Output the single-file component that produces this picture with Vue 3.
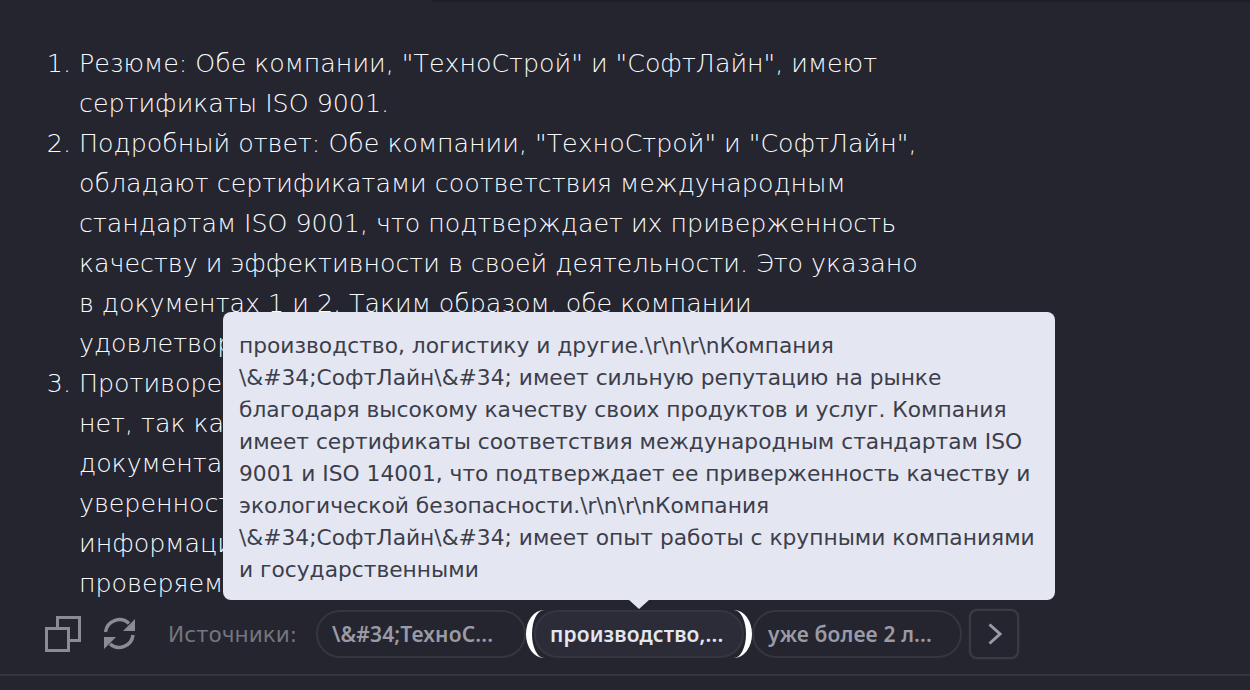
<script setup>
const sources = [
  { label: '\\&#34;ТехноС...', active: false },
  { label: 'производство,...', active: true },
  { label: 'уже более 2 л...', active: false },
];

const answers = [
  ['Резюме: Обе компании, "ТехноСтрой" и "СофтЛайн", имеют', 'сертификаты ISO 9001.'],
  [
    'Подробный ответ: Обе компании, "ТехноСтрой" и "СофтЛайн",',
    'обладают сертификатами соответствия международным',
    'стандартам ISO 9001, что подтверждает их приверженность',
    'качеству и эффективности в своей деятельности. Это указано',
    'в документах 1 и 2. Таким образом, обе компании',
    'удовлетворяют требованиям стандарта.',
  ],
  [
    'Противоречий в предоставленной информации',
    'нет, так как данные в обоих',
    'документах согласованы, что даёт',
    'уверенность в достоверности. Вся',
    'информация основана на',
    'проверяемых источниках.',
  ],
];

const tooltip = [
  'производство, логистику и другие.\\r\\n\\r\\nКомпания',
  '\\&#34;СофтЛайн\\&#34; имеет сильную репутацию на рынке',
  'благодаря высокому качеству своих продуктов и услуг. Компания',
  'имеет сертификаты соответствия международным стандартам ISO',
  '9001 и ISO 14001, что подтверждает ее приверженность качеству и',
  'экологической безопасности.\\r\\n\\r\\nКомпания',
  '\\&#34;СофтЛайн\\&#34; имеет опыт работы с крупными компаниями',
  'и государственными',
];
</script>

<template>
  <div class="page">
    <div class="top-edge"></div>
    <ol class="answer">
      <li v-for="(item, i) in answers" :key="i">
        <div v-for="line in item" :key="line">{{ line }}</div>
      </li>
    </ol>

    <div class="toolbar">
      <svg class="icon" width="36" height="36" viewBox="0 0 36 36" fill="none" stroke="#8b8b96" stroke-width="3">
        <rect x="1.5" y="12.5" width="22" height="22" />
        <path d="M12.500 11V1.500h22v23H25" />
      </svg>
      <svg class="icon refresh" width="34" height="34" viewBox="0 0 34 34" fill="none">
        <path d="M2.500 15A14 14 0 0 1 26 6.500M30 18A14 14 0 0 1 7 27" stroke="#8b8b96" stroke-width="3.500" />
        <path d="M32 2v12H20zM1 32V20h12z" fill="#8b8b96" />
      </svg>
      <span class="label">Источники:</span>
      <div class="chips">
        <span v-for="s in sources" :key="s.label" class="chip" :class="{ active: s.active }">{{ s.label }}</span>
      </div>
      <button class="next">
        <svg width="14" height="22" viewBox="0 0 14 22" fill="none" stroke="#9a9ba8" stroke-width="3">
          <path d="M1.500 1.500L12 11 1.500 20.500" />
        </svg>
      </button>
    </div>
    <div class="rule"></div>

    <div class="tooltip">
      <div v-for="line in tooltip" :key="line">{{ line }}</div>
      <span class="arrow"></span>
    </div>
  </div>
</template>

<style>
html, body {
  margin: 0;
  background: #24252f;
}
</style>

<style scoped>
.page {
  position: relative;
  width: 1250px;
  height: 690px;
  overflow: hidden;
  background: #24252f;
  font-family: "DejaVu Sans", sans-serif;
}

.top-edge {
  position: absolute;
  top: 0;
  left: 432px;
  right: 0;
  height: 2px;
  background: #1e1f28;
}

.answer {
  margin: 0;
  height: 558px;
  padding: 44px 0 0 79px;
  overflow: hidden;
  font-size: 25.3px;
  font-weight: 200;
  line-height: 40px;
  color: #fafbff;
  white-space: nowrap;
}

.toolbar {
  display: flex;
  align-items: center;
  height: 48px;
  margin-top: 8px;
  padding-left: 45px;
}

.refresh {
  margin-left: 22px;
}

.label {
  width: 130px;
  margin-left: 31px;
  font-size: 21.6px;
  color: #74757f;
  white-space: nowrap;
}

.chips {
  display: flex;
  gap: 8px;
  margin-left: 18px;
}

.chip {
  box-sizing: border-box;
  width: 210px;
  height: 48px;
  padding: 0 14px;
  border: 2px solid #35363f;
  border-radius: 24px;
  font-family: "Noto Sans", sans-serif;
  font-size: 21px;
  font-weight: 600;
  letter-spacing: 0.15px;
  line-height: 44px;
  color: #9a9ba6;
  white-space: nowrap;
}

.chip.active {
  position: relative;
  background: #2b2c37;
  color: #e4e6f0;
}

.chip.active::before,
.chip.active::after {
  content: "";
  position: absolute;
  top: -2px;
  box-sizing: border-box;
  width: 36px;
  height: 48px;
  border-radius: 50%;
}

.chip.active::before {
  left: -10px;
  border-left: 6px solid #fff;
}

.chip.active::after {
  right: -10px;
  border-right: 6px solid #fff;
}

.next {
  display: flex;
  align-items: center;
  justify-content: center;
  box-sizing: border-box;
  flex: none;
  width: 50px;
  height: 50px;
  margin-left: 7px;
  padding: 0 0 0 2px;
  border: 2px solid #3a3b45;
  border-radius: 8px;
  background: transparent;
  box-shadow: 0 0 2px #3a3b45;
}

.rule {
  height: 2px;
  margin-top: 16px;
  background: #35363f;
}

.tooltip {
  position: absolute;
  top: 312px;
  left: 223px;
  box-sizing: border-box;
  width: 832px;
  height: 288px;
  padding: 18px 16px;
  border-radius: 8px;
  background: #e4e7f1;
  color: #3d3e4b;
  font-size: 21.75px;
  line-height: 32px;
  white-space: nowrap;
}

.arrow {
  position: absolute;
  bottom: -9px;
  left: 406px;
  border-left: 10px solid transparent;
  border-right: 10px solid transparent;
  border-top: 9px solid #e4e7f1;
}
</style>
